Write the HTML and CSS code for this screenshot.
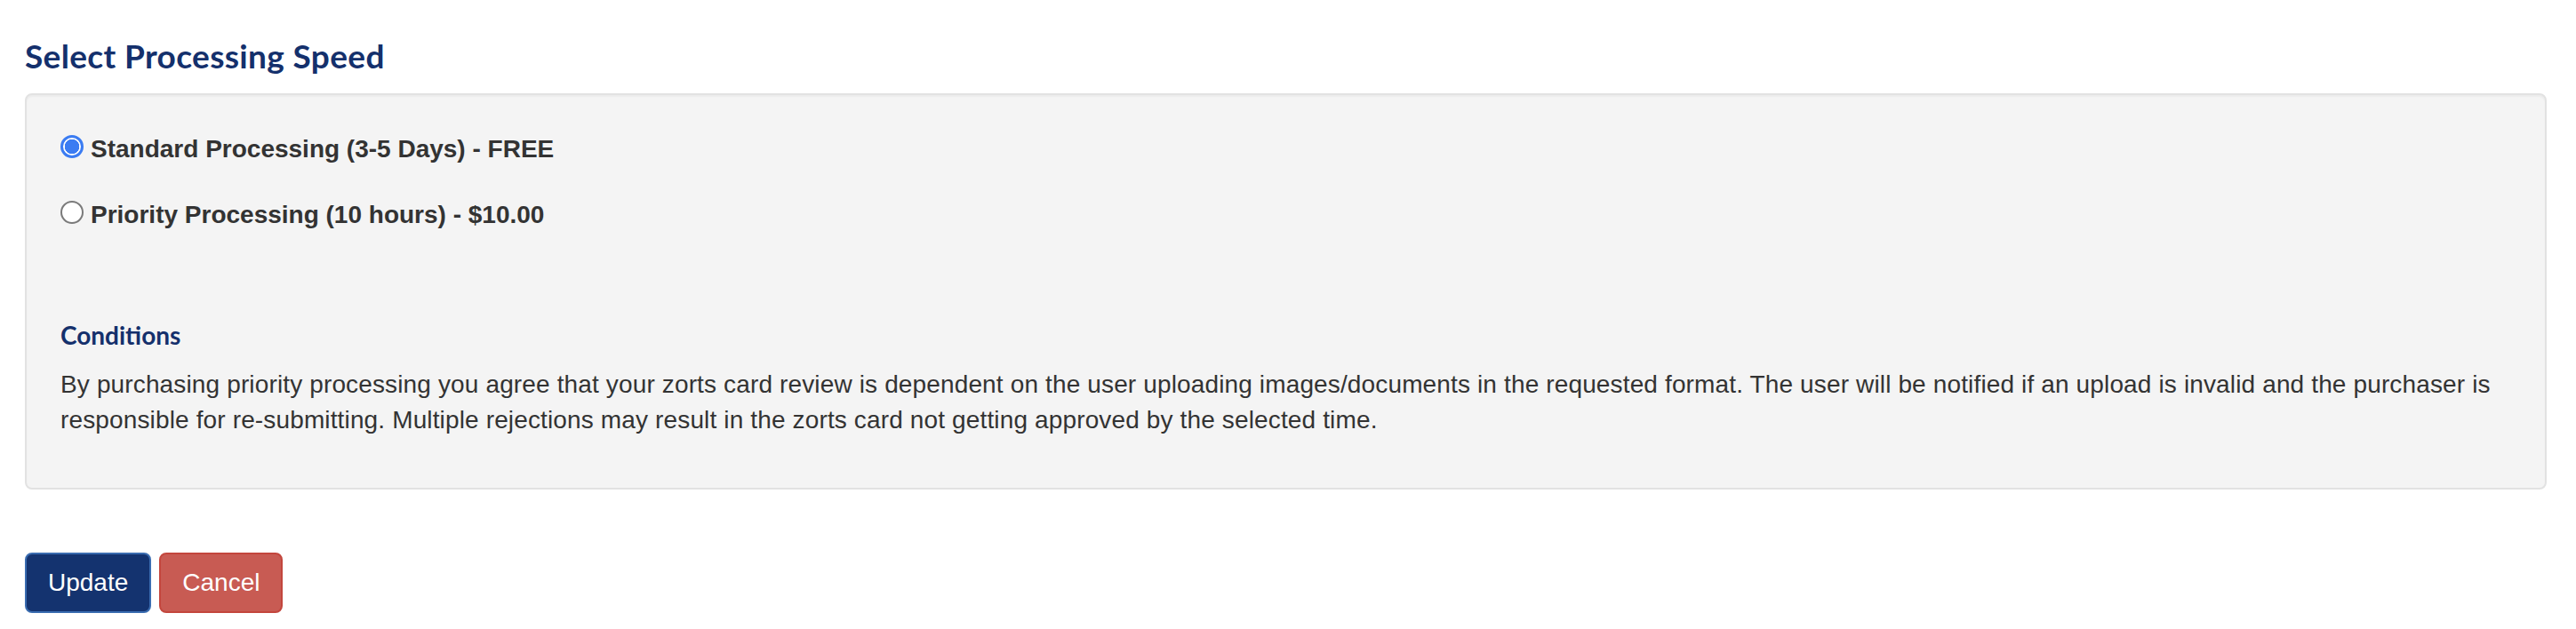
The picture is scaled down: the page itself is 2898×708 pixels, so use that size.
FILE: index.html
```html
<!DOCTYPE html>
<html lang="en">
<head>
<meta charset="utf-8">
<title>Select Processing Speed</title>
<link rel="stylesheet" href="styles.css">
</head>
<body>
<main class="page">
  <h2 class="title">Select Processing Speed</h2>
  <section class="well">
    <div class="options">
      <label class="option">
        <input type="radio" name="speed" class="radio" checked>
        <span>Standard Processing (3-5 Days) - FREE</span>
      </label>
      <label class="option">
        <input type="radio" name="speed" class="radio">
        <span>Priority Processing (10 hours) - $10.00</span>
      </label>
    </div>
    <h4 class="subtitle">Conditions</h4>
    <p class="terms">By purchasing priority processing you agree that your zorts card review is dependent on the user uploading images/documents in the requested format. The user will be notified if an upload is invalid and the purchaser is responsible for re-submitting. Multiple rejections may result in the zorts card not getting approved by the selected time.</p>
  </section>
  <div class="actions">
    <button class="btn btn-primary" type="button">Update</button>
    <button class="btn btn-danger" type="button">Cancel</button>
  </div>
</main>
</body>
</html>
```
FILE: styles.css
```css
html, body {
  margin: 0;
  padding: 0;
  background: #ffffff;
}

body {
  font-family: "Liberation Sans", Arial, Helvetica, sans-serif;
  font-size: 28px;
  line-height: 40px;
  color: #333333;
}

.page {
  padding: 0 33px 0 28px;
}

.title {
  margin: 0;
  padding-top: 38px;
  font-family: "Lato", "Open Sans", sans-serif;
  font-weight: 700;
  font-size: 37px;
  line-height: 50px;
  letter-spacing: 0.35px;
  color: #14306c;
}

.well {
  margin-top: 17px;
  padding: 38px;
  background: #f4f4f4;
  border: 2px solid #e2e2e2;
  border-radius: 8px;
  box-shadow: inset 0 2px 2px rgba(0, 0, 0, 0.04);
}

.options {
  display: flex;
  flex-direction: column;
  gap: 34px;
  padding-top: 3px;
}

.option {
  display: flex;
  align-items: center;
  gap: 8px;
  height: 40px;
  font-weight: 700;
}

.radio {
  appearance: none;
  -webkit-appearance: none;
  margin: 0;
  width: 26px;
  height: 26px;
  border-radius: 50%;
  border: 2px solid #7a7a7a;
  background: #ffffff;
  position: relative;
  top: -3px;
  flex: none;
}

.radio:checked {
  border: 3px solid #3b7cf2;
  background: radial-gradient(circle, #3b7cf2 0 8px, #ffffff 8.5px);
}

.subtitle {
  margin: 95px 0 16px 0;
  font-family: "Lato", "Open Sans", sans-serif;
  font-weight: 700;
  font-size: 28px;
  line-height: 40px;
  color: #14306c;
}

.terms {
  margin: 0 0 18px 0;
  letter-spacing: 0.14px;
}

.actions {
  display: flex;
  gap: 9px;
  margin-top: 71px;
}

.btn {
  font-family: "Liberation Sans", Arial, Helvetica, sans-serif;
  font-size: 28px;
  line-height: 40px;
  padding: 12px 24px;
  border-radius: 8px;
  border: 2px solid transparent;
  color: #ffffff;
  cursor: pointer;
}

.btn-primary {
  background: #14336f;
  border-color: #3a6cb0;
}

.btn-danger {
  background: #c85b53;
  border-color: #c3463d;
}
```
